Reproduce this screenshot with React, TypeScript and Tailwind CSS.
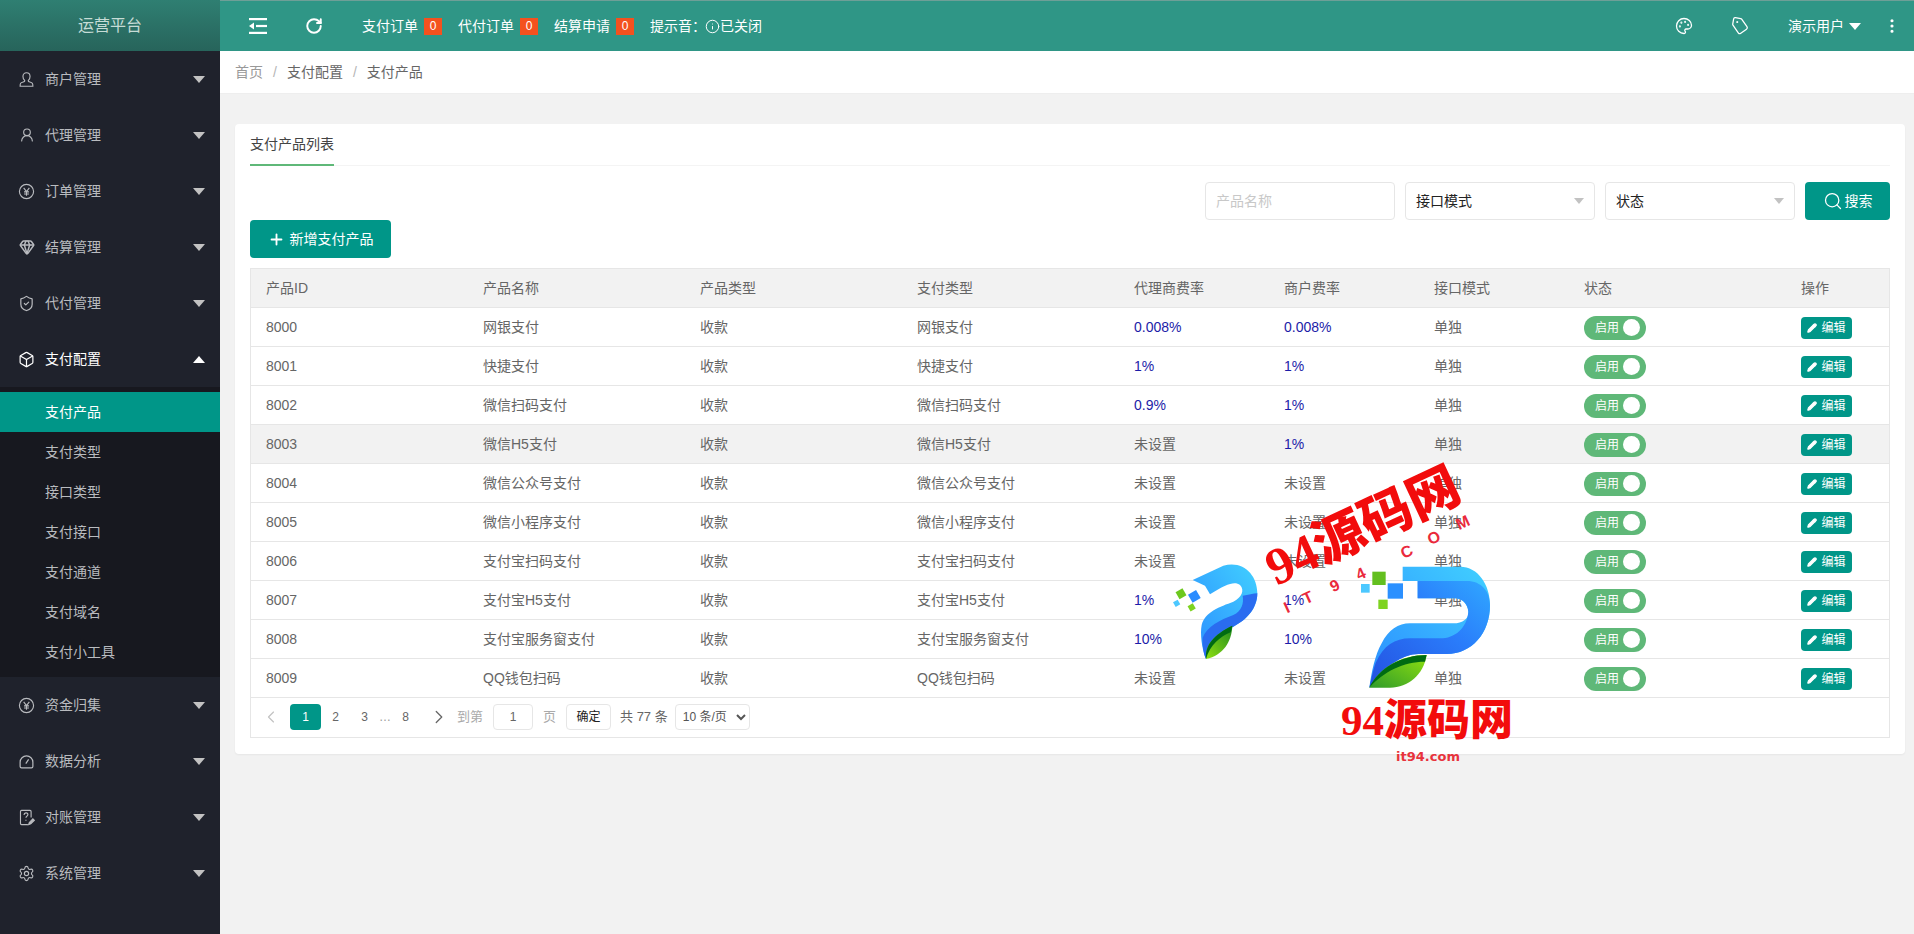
import { Box, ChevronLeft, ChevronRight, EllipsisVertical, Gem, Info, Palette, Pencil, Plus, RotateCw, Search, Settings, ShieldCheck, Tag, UserRound } from "lucide-react";

const YenIcon = () => (
    <svg width="17" height="17" viewBox="0 0 24 24" fill="none" stroke="currentColor" strokeWidth="1.6">
        <circle cx="12" cy="12" r="10" />
        <path d="M8 7l4 5 4-5M12 12v6M8.500 12.500h7M8.500 15.500h7" />
    </svg>
)

const MerchantIcon = () => (
    <svg width="17" height="17" viewBox="0 0 24 24" fill="none" stroke="currentColor" strokeWidth="1.6">
        <path d="M12 2.500c3 0 5 2.200 5 5.200 0 2.400-.9 4.300-2.400 5.500v1.300c0 .8 4.400 1.300 5.700 2.800.6.7.7 3.200.7 4.200H3c0-1 .1-3.500.7-4.200 1.300-1.500 5.700-2 5.700-2.800v-1.300C7.900 12 7 10.100 7 7.700c0-3 2-5.200 5-5.200z" />
    </svg>
)

const DashboardIcon = () => (
    <svg width="17" height="17" viewBox="0 0 24 24" fill="none" stroke="currentColor" strokeWidth="1.7">
        <path d="M5 21h14c1.200 0 2-.8 2-2v-6a9 9 0 0 0-18 0v6c0 1.200.8 2 2 2z" />
        <path d="M11 15l4-6" />
    </svg>
)

const ReconcileIcon = () => (
    <svg width="17" height="17" viewBox="0 0 24 24" fill="none" stroke="currentColor" strokeWidth="1.6">
        <path d="M14 22H5a1.500 1.500 0 0 1-1.500-1.500v-17A1.500 1.500 0 0 1 5 2h12a1.500 1.500 0 0 1 1.500 1.500V12" />
        <path d="M8.500 8.500c0-4 5.500-4 5.500-.6 0 2.100-2.800 2.300-2.800 4.600M11.200 15v1.500" />
        <path d="M15 22l1-3 5-5 2 2-5 5z" fill="currentColor" />
    </svg>
)

const MenuFold = () => (
    <svg width="18" height="16" viewBox="0 0 18 16" fill="white">
        <rect x="0" y="0" width="18" height="2.200" />
        <rect x="7" y="6.900" width="11" height="2.200" />
        <rect x="0" y="13.800" width="18" height="2.200" />
        <path d="M0 8l5-3.500v7z" />
    </svg>
)

const Caret = ({ up, className }: any) => (
    <span className={`w-0 h-0 border-x-[6px] border-x-transparent ${up ? "border-b-[7px] border-b-white" : "border-t-[7px] border-t-[#c2c2c2]"} ${className || ""}`} />
)

const menuTop = [
    { label: "商户管理", icon: <MerchantIcon /> },
    { label: "代理管理", icon: <UserRound size={16} strokeWidth={1.7} /> },
    { label: "订单管理", icon: <YenIcon /> },
    { label: "结算管理", icon: <Gem size={16} strokeWidth={2.2} /> },
    { label: "代付管理", icon: <ShieldCheck size={17} strokeWidth={1.7} /> },
]

const menuBottom = [
    { label: "资金归集", icon: <YenIcon /> },
    { label: "数据分析", icon: <DashboardIcon /> },
    { label: "对账管理", icon: <ReconcileIcon /> },
    { label: "系统管理", icon: <Settings size={17} strokeWidth={1.6} /> },
]

const subMenu = ["支付产品", "支付类型", "接口类型", "支付接口", "支付通道", "支付域名", "支付小工具"]

const MenuItem = ({ label, icon, open }: any) => (
    <div className={`h-[56px] flex items-center pl-[18px] pr-[15px] text-sm ${open ? "text-white" : "text-[#b9bbbf]"}`}>
        <span className="w-[17px] flex justify-center">{icon}</span>
        <span className="ml-[10px] flex-1">{label}</span>
        <Caret up={open} />
    </div>
)

const Sidebar = () => (
    <aside className="w-[220px] shrink-0 bg-[#1f222c] flex flex-col">
        <div className="h-[51px] flex items-center justify-center text-base text-[#c6dcd6] bg-gradient-to-b from-[#2f7f72] to-[#27645b]">
            运营平台
        </div>
        {menuTop.map((m) => <MenuItem key={m.label} {...m} />)}
        <MenuItem label="支付配置" icon={<Box size={17} strokeWidth={1.7} />} open />
        <div className="bg-[#17181f] py-[5px]">
            {subMenu.map((s, i) => (
                <div key={s} className={`h-10 flex items-center pl-[45px] text-sm ${i === 0 ? "bg-[#009688] text-white" : "text-[#b9bbbf]"}`}>
                    {s}
                </div>
            ))}
        </div>
        {menuBottom.map((m) => <MenuItem key={m.label} {...m} />)}
    </aside>
)

const Counter = ({ label, count }: any) => (
    <div className="flex items-center">
        <span>{label}</span>
        <span className="ml-[6px] w-[18px] h-[17px] bg-[#f4511e] text-xs flex items-center justify-center">{count}</span>
    </div>
)

const TopBar = () => (
    <header className="h-[51px] bg-[#2f9686] border-t border-t-[#6e9f97] flex items-center text-white text-sm">
        <div className="ml-[29px] flex"><MenuFold /></div>
        <RotateCw size={18} strokeWidth={2.6} className="ml-[38px]" />
        <div className="ml-[39px] flex items-center gap-[16px]">
            <Counter label="支付订单" count={0} />
            <Counter label="代付订单" count={0} />
            <Counter label="结算申请" count={0} />
            <div className="flex items-center">
                <span>提示音：</span>
                <Info size={15} strokeWidth={1.6} className="-ml-[1px]" />
                <span>已关闭</span>
            </div>
        </div>
        <div className="ml-auto flex items-center">
            <Palette size={18} strokeWidth={1.7} />
            <Tag size={18} strokeWidth={1.7} className="ml-[38px] rotate-[10deg]" />
            <span className="ml-[39px]">演示用户</span>
            <span className="ml-[5px] w-0 h-0 border-x-[6px] border-x-transparent border-t-[7px] border-t-white" />
            <EllipsisVertical size={18} strokeWidth={2.2} className="ml-[22px] mr-[13px]" />
        </div>
    </header>
)

const Breadcrumb = () => (
    <div className="h-[43px] bg-white border-b border-b-[#eeeeee] flex items-center pl-[15px] text-sm text-[#666666]">
        <span className="text-[#999999]">首页</span>
        <span className="mx-[10px] text-[#b5b5b5]">/</span>
        <span>支付配置</span>
        <span className="mx-[10px] text-[#b5b5b5]">/</span>
        <span>支付产品</span>
    </div>
)

const FakeSelect = ({ label }: any) => (
    <div className="w-[190px] h-[38px] bg-white border border-[#e6e6e6] rounded-sm flex items-center justify-between pl-[10px] pr-[10px] text-sm text-[#222222]">
        <span>{label}</span>
        <span className="w-0 h-0 border-x-[5px] border-x-transparent border-t-[6px] border-t-[#c2c2c2]" />
    </div>
)

const rows = [
    ["8000", "网银支付", "0.008%", "0.008%"],
    ["8001", "快捷支付", "1%", "1%"],
    ["8002", "微信扫码支付", "0.9%", "1%"],
    ["8003", "微信H5支付", "未设置", "1%"],
    ["8004", "微信公众号支付", "未设置", "未设置"],
    ["8005", "微信小程序支付", "未设置", "未设置"],
    ["8006", "支付宝扫码支付", "未设置", "未设置"],
    ["8007", "支付宝H5支付", "1%", "1%"],
    ["8008", "支付宝服务窗支付", "10%", "10%"],
    ["8009", "QQ钱包扫码", "未设置", "未设置"],
]

const headers = ["产品ID", "产品名称", "产品类型", "支付类型", "代理商费率", "商户费率", "接口模式", "状态", "操作"]

const Rate = ({ value }: any) => (
    <td className="pl-[15px] border-b border-b-[#e6e6e6]">
        <span className={value === "未设置" ? "" : "text-[#1c1ca8]"}>{value}</span>
    </td>
)

const ProductTable = () => (
    <table className="w-full table-fixed border-collapse text-sm text-[#666666]">
        <colgroup>
            <col className="w-[217px]" />
            <col className="w-[217px]" />
            <col className="w-[217px]" />
            <col className="w-[217px]" />
            <col className="w-[150px]" />
            <col className="w-[150px]" />
            <col className="w-[150px]" />
            <col className="w-[217px]" />
            <col />
        </colgroup>
        <thead>
            <tr className="h-[38px] bg-[#f2f2f2]">
                {headers.map((h) => (
                    <th key={h} className="pl-[15px] font-normal text-left border-b border-b-[#e6e6e6]">{h}</th>
                ))}
            </tr>
        </thead>
        <tbody>
            {rows.map((r, i) => (
                <tr key={r[0]} className={`h-[39px] ${i === 3 ? "bg-[#f2f2f2]" : ""}`}>
                    <td className="pl-[15px] border-b border-b-[#e6e6e6]">{r[0]}</td>
                    <td className="pl-[15px] border-b border-b-[#e6e6e6]">{r[1]}</td>
                    <td className="pl-[15px] border-b border-b-[#e6e6e6]">收款</td>
                    <td className="pl-[15px] border-b border-b-[#e6e6e6]">{r[1]}</td>
                    <Rate value={r[2]} />
                    <Rate value={r[3]} />
                    <td className="pl-[15px] border-b border-b-[#e6e6e6]">单独</td>
                    <td className="pl-[15px] border-b border-b-[#e6e6e6]">
                        <div className="mt-[2px] w-[62px] h-[24px] rounded-full bg-[#5fb878] flex items-center justify-between pl-[11px] pr-[6px] text-xs text-white">
                            <span>启用</span>
                            <span className="w-[17px] h-[17px] rounded-full bg-white" />
                        </div>
                    </td>
                    <td className="pl-[15px] border-b border-b-[#e6e6e6]">
                        <div className="mt-[2px] w-[51px] h-[22px] rounded-sm bg-[#009688] flex items-center justify-center gap-[4px] text-xs text-white">
                            <Pencil size={10} strokeWidth={3} fill="white" />
                            <span>编辑</span>
                        </div>
                    </td>
                </tr>
            ))}
        </tbody>
    </table>
)

const Pagination = () => (
    <div className="h-[39px] flex items-center text-xs text-[#666666]">
        <ChevronLeft size={20} strokeWidth={1.4} className="ml-[10px] text-[#c2c2c2]" />
        <span className="ml-[9px] w-[31px] h-[26px] bg-[#009688] text-white rounded-sm flex items-center justify-center">1</span>
        <span className="ml-[6px] w-[17px] text-center">2</span>
        <span className="ml-[12px] w-[17px] text-center">3</span>
        <span className="ml-[4px] w-[16px] text-center text-[#999999]">…</span>
        <span className="ml-[4px] w-[17px] text-center">8</span>
        <ChevronRight size={22} strokeWidth={1.4} className="ml-[14px]" />
        <span className="ml-[7px] text-[13px] text-[#aaaaaa]">到第</span>
        <span className="ml-[10px] w-[40px] h-[26px] border border-[#e6e6e6] rounded-sm flex items-center justify-center">1</span>
        <span className="ml-[10px] text-[13px] text-[#aaaaaa]">页</span>
        <span className="ml-[10px] w-[45px] h-[26px] border border-[#e6e6e6] rounded-sm flex items-center justify-center text-[#222222]">确定</span>
        <span className="ml-[9px] text-[13px]">共 77 条</span>
        <select className="ml-[7px] w-[75px] h-[26px] border border-[#e6e6e6] rounded-sm pl-[3px] text-xs text-[#555555] bg-white">
            <option>10 条/页</option>
        </select>
    </div>
)

const Card = () => (
    <section className="bg-white rounded-sm shadow-[0_1px_2px_rgba(0,0,0,0.05)] px-[15px] pb-[16px]">
        <div className="h-[42px] border-b border-b-[#f4f4f4] text-sm text-[#444444]">
            <div className="w-[84px] h-[42px] border-b-2 border-b-[#5fb878] flex items-center">支付产品列表</div>
        </div>
        <div className="mt-[16px] flex justify-end gap-[10px]">
            <input
                placeholder="产品名称"
                className="w-[190px] h-[38px] border border-[#e6e6e6] rounded-sm pl-[10px] text-sm outline-none placeholder:text-[#c8c8c8]"
            />
            <FakeSelect label="接口模式" />
            <FakeSelect label="状态" />
            <button className="w-[85px] h-[38px] bg-[#009688] text-white text-sm rounded-sm flex items-center justify-center gap-[2px]">
                <Search size={20} strokeWidth={1.5} />
                <span>搜索</span>
            </button>
        </div>
        <button className="w-[141px] h-[38px] bg-[#009688] text-white text-sm rounded-sm flex items-center justify-center gap-[5px]">
            <Plus size={17} strokeWidth={2.6} />
            <span>新增支付产品</span>
        </button>
        <div className="mt-[10px] border border-[#e6e6e6]">
            <ProductTable />
            <Pagination />
        </div>
    </section>
)

const BigLogo = () => (
    <svg className="absolute left-[1340px] top-[555px]" width="180" height="150" viewBox="0 0 540 450">
        <defs>
            <linearGradient id="bigBlue" x1="0" y1="1" x2="1" y2="0">
                <stop offset="0" stopColor="#2b8cff" />
                <stop offset="1" stopColor="#41d0ff" />
            </linearGradient>
            <linearGradient id="bigDeep" x1="0" y1="1" x2="1" y2="0">
                <stop offset="0" stopColor="#2450e0" />
                <stop offset="0.6" stopColor="#2a7dfb" />
                <stop offset="1" stopColor="#30a8ff" />
            </linearGradient>
            <linearGradient id="bigLeaf" x1="0" y1="1" x2="1" y2="0">
                <stop offset="0" stopColor="#2f9a2a" />
                <stop offset="1" stopColor="#8fe010" />
            </linearGradient>
        </defs>
        <rect x="97" y="50" width="40" height="40" fill="#63bf1f" />
        <rect x="143" y="85" width="46" height="46" fill="#2b90ff" />
        <rect x="63" y="87" width="26" height="26" fill="#4cc8ff" />
        <rect x="115" y="134" width="28" height="28" fill="#7ed321" />
        <path d="M188 35H360C415 35 450 90 450 150C450 235 395 297 320 297H235C190 297 130 335 88 398C95 350 105 300 125 265C145 225 175 205 210 205H340C368 205 388 190 385 170C383 145 365 130 345 130H233V78H188Z" fill="url(#bigBlue)" />
        <path d="M233 78H380C425 78 450 110 450 150C450 235 395 297 320 297H235C190 297 130 335 88 398C95 370 100 340 108 322C130 272 165 250 210 250H300C345 250 380 220 385 170C383 145 365 130 345 130H233Z" fill="url(#bigDeep)" />
        <path d="M88 398C120 335 185 300 260 300C250 360 205 398 150 398Z" fill="url(#bigLeaf)" />
        <path d="M88 398C115 340 185 300 260 300L255 320C190 320 130 350 88 398Z" fill="#006b12" />
    </svg>
)

const SmallLogo = () => (
    <svg className="absolute left-[1170px] top-[555px]" width="180" height="120" viewBox="0 0 540 360">
        <defs>
            <linearGradient id="smallBlue" x1="0" y1="1" x2="1" y2="0">
                <stop offset="0" stopColor="#2b8cff" />
                <stop offset="1" stopColor="#41d0ff" />
            </linearGradient>
            <linearGradient id="smallLeaf" x1="0" y1="1" x2="1" y2="0">
                <stop offset="0" stopColor="#8fe010" />
                <stop offset="1" stopColor="#1f8a20" />
            </linearGradient>
        </defs>
        <rect x="21" y="104" width="24" height="24" fill="#6cc81e" transform="rotate(-30 33 116)" />
        <rect x="59" y="110" width="28" height="28" fill="#2b8cff" transform="rotate(-30 73 124)" />
        <rect x="12" y="137" width="16" height="16" fill="#4cc8ff" transform="rotate(-30 20 145)" />
        <rect x="56" y="148" width="18" height="18" fill="#7ed321" transform="rotate(-30 65 157)" />
        <path d="M68 75L160 32C220 15 262 60 262 115C262 160 230 195 190 215C150 235 120 260 108 312C95 280 90 235 95 210C105 170 150 155 190 140C215 128 225 105 210 90C195 78 170 85 120 118L105 92Z" fill="url(#smallBlue)" />
        <path d="M98 248C110 215 150 195 190 180C215 168 222 145 218 122C235 120 250 115 262 115C262 160 230 195 190 215C150 235 120 260 108 312C100 295 97 270 98 248Z" fill="#2a6cf0" />
        <path d="M108 312C105 270 130 240 187 212C185 260 160 300 108 312Z" fill="url(#smallLeaf)" />
        <path d="M108 312C105 270 130 240 187 212L182 232C150 245 120 270 108 312Z" fill="#006b12" />
    </svg>
)

const curvedLetters = [
    { ch: "I", pos: "left-[1287px] top-[608px]" },
    { ch: "T", pos: "left-[1308px] top-[598px]" },
    { ch: "9", pos: "left-[1335px] top-[586px]" },
    { ch: "4", pos: "left-[1361px] top-[574px]" },
    { ch: "C", pos: "left-[1407px] top-[552px]" },
    { ch: "O", pos: "left-[1434px] top-[538px]" },
    { ch: "M", pos: "left-[1463px] top-[523px]" },
]

// 水印 sits on top of the table
const Watermark = () => (
    <div className="absolute inset-0 pointer-events-none text-[#f20c0c]">
        <SmallLogo />
        <BigLogo />
        <div className="absolute left-[1363px] top-[527px] -translate-x-1/2 -translate-y-1/2 -rotate-[25deg] whitespace-nowrap text-[52px] leading-none font-black font-['Liberation_Serif','Noto_Sans_CJK_SC',serif]">
            94源码网
        </div>
        {curvedLetters.map((l) => (
            <span key={l.ch} className={`absolute ${l.pos} -translate-x-1/2 -translate-y-1/2 -rotate-[25deg] text-base font-bold text-[#ea2a3c]`}>{l.ch}</span>
        ))}
        <div className="absolute left-[1427px] top-[720px] -translate-x-1/2 -translate-y-1/2 whitespace-nowrap text-[43px] leading-none font-black font-['Liberation_Serif','Noto_Sans_CJK_SC',serif]">
            94源码网
        </div>
        <div className="absolute left-[1428px] top-[757px] -translate-x-1/2 -translate-y-1/2 text-[13px] font-bold text-[#e8333c] font-['DejaVu_Sans',sans-serif]">
            it94.com
        </div>
    </div>
)

export default function App() {
    return (
        <div className="relative flex h-screen overflow-hidden font-['Liberation_Sans','Noto_Sans_CJK_SC',sans-serif]">
            <Sidebar />
            <div className="flex-1 min-w-0 flex flex-col bg-[#f2f2f2]">
                <TopBar />
                <Breadcrumb />
                <main className="flex-1 pt-[30px] pl-[15px] pr-[9px]">
                    <Card />
                </main>
            </div>
            <Watermark />
        </div>
    )
}
